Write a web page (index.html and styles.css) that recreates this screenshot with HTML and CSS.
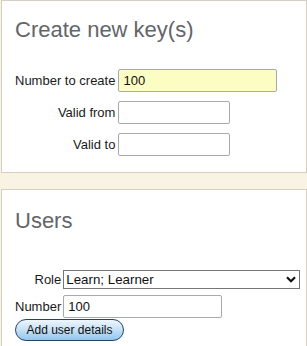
FILE: index.html
```html
<!DOCTYPE html>
<html>
<head>
<meta charset="utf-8">
<link rel="stylesheet" href="styles.css">
</head>
<body>
<section class="panel panel-keys">
  <h2 class="title">Create new key(s)</h2>
  <div class="form form-keys">
    <label class="lbl">Number to create</label>
    <input class="field field-yellow field-wide" type="text" value="100">
    <label class="lbl">Valid from</label>
    <input class="field field-mid" type="text" value="">
    <label class="lbl">Valid to</label>
    <input class="field field-mid" type="text" value="">
  </div>
</section>
<section class="panel panel-users">
  <h2 class="title">Users</h2>
  <div class="form form-users">
    <label class="lbl">Role</label>
    <div class="select">
      <span class="select-text">Learn; Learner</span>
      <svg class="chev" width="10" height="7" viewBox="0 0 10 7"><path d="M1 1.2 L5 5.2 L9 1.2" fill="none" stroke="#111" stroke-width="2.2"/></svg>
    </div>
    <label class="lbl">Number</label>
    <input class="field field-num" type="text" value="100">
  </div>
  <button class="btn">Add user details</button>
</section>
</body>
</html>
```

FILE: styles.css
```css
html, body {
  margin: 0;
  padding: 0;
}
body {
  background: #f9f3e4;
  font-family: "Liberation Sans", Arial, sans-serif;
  font-size: 13px;
  color: #1a1a1a;
  width: 307px;
  height: 346px;
  overflow: hidden;
}
.panel {
  background: #fff;
  border: 1px solid #d3cfc5;
  margin-left: 1px;
  padding: 0 12px;
}
.panel-keys {
  padding-top: 16px;
  padding-bottom: 16px;
}
.panel-users {
  margin-top: 16px;
  padding-top: 18px;
  padding-bottom: 6px;
}
.title {
  margin: 0;
  font-weight: normal;
  font-size: 22px;
  line-height: 25px;
  color: #626569;
  padding-left: 1px;
}
.form {
  display: grid;
  grid-template-columns: auto auto;
  justify-content: start;
  align-items: center;
  column-gap: 3px;
  padding-left: 1px;
}
.form-keys {
  margin-top: 27px;
  row-gap: 9px;
}
.form-users {
  margin-top: 37px;
  row-gap: 6px;
  column-gap: 2px;
}
.lbl {
  text-align: right;
  white-space: nowrap;
}
.field {
  box-sizing: border-box;
  height: 23px;
  border: 1px solid #a9a9a9;
  border-radius: 2px;
  padding: 0 4px;
  font-family: "Liberation Sans", Arial, sans-serif;
  font-size: 13px;
  color: #111;
  background: #fff;
  margin: 0;
  outline: none;
}
.field-yellow {
  background: #fbfdc2;
}
.field-wide {
  width: 159px;
}
.field-mid {
  width: 112px;
}
.field-num {
  width: 159px;
}
.select {
  box-sizing: border-box;
  width: 237px;
  height: 19px;
  border: 1px solid #767676;
  display: flex;
  align-items: center;
  justify-content: space-between;
  padding: 0 3px 0 2px;
  background: #fff;
}
.select-text {
  font-size: 13.33px;
  color: #111;
}
.chev {
  display: block;
}
.btn {
  display: block;
  box-sizing: border-box;
  margin: 1px 0 0 1px;
  width: 109px;
  height: 22px;
  border: 1px solid #24456b;
  border-radius: 11px;
  background: linear-gradient(to bottom, #eef6fd 0%, #c9e2f6 45%, #94c6ec 100%);
  font-family: "Liberation Sans", Arial, sans-serif;
  font-size: 12px;
  color: #111;
  padding: 0;
}
```
